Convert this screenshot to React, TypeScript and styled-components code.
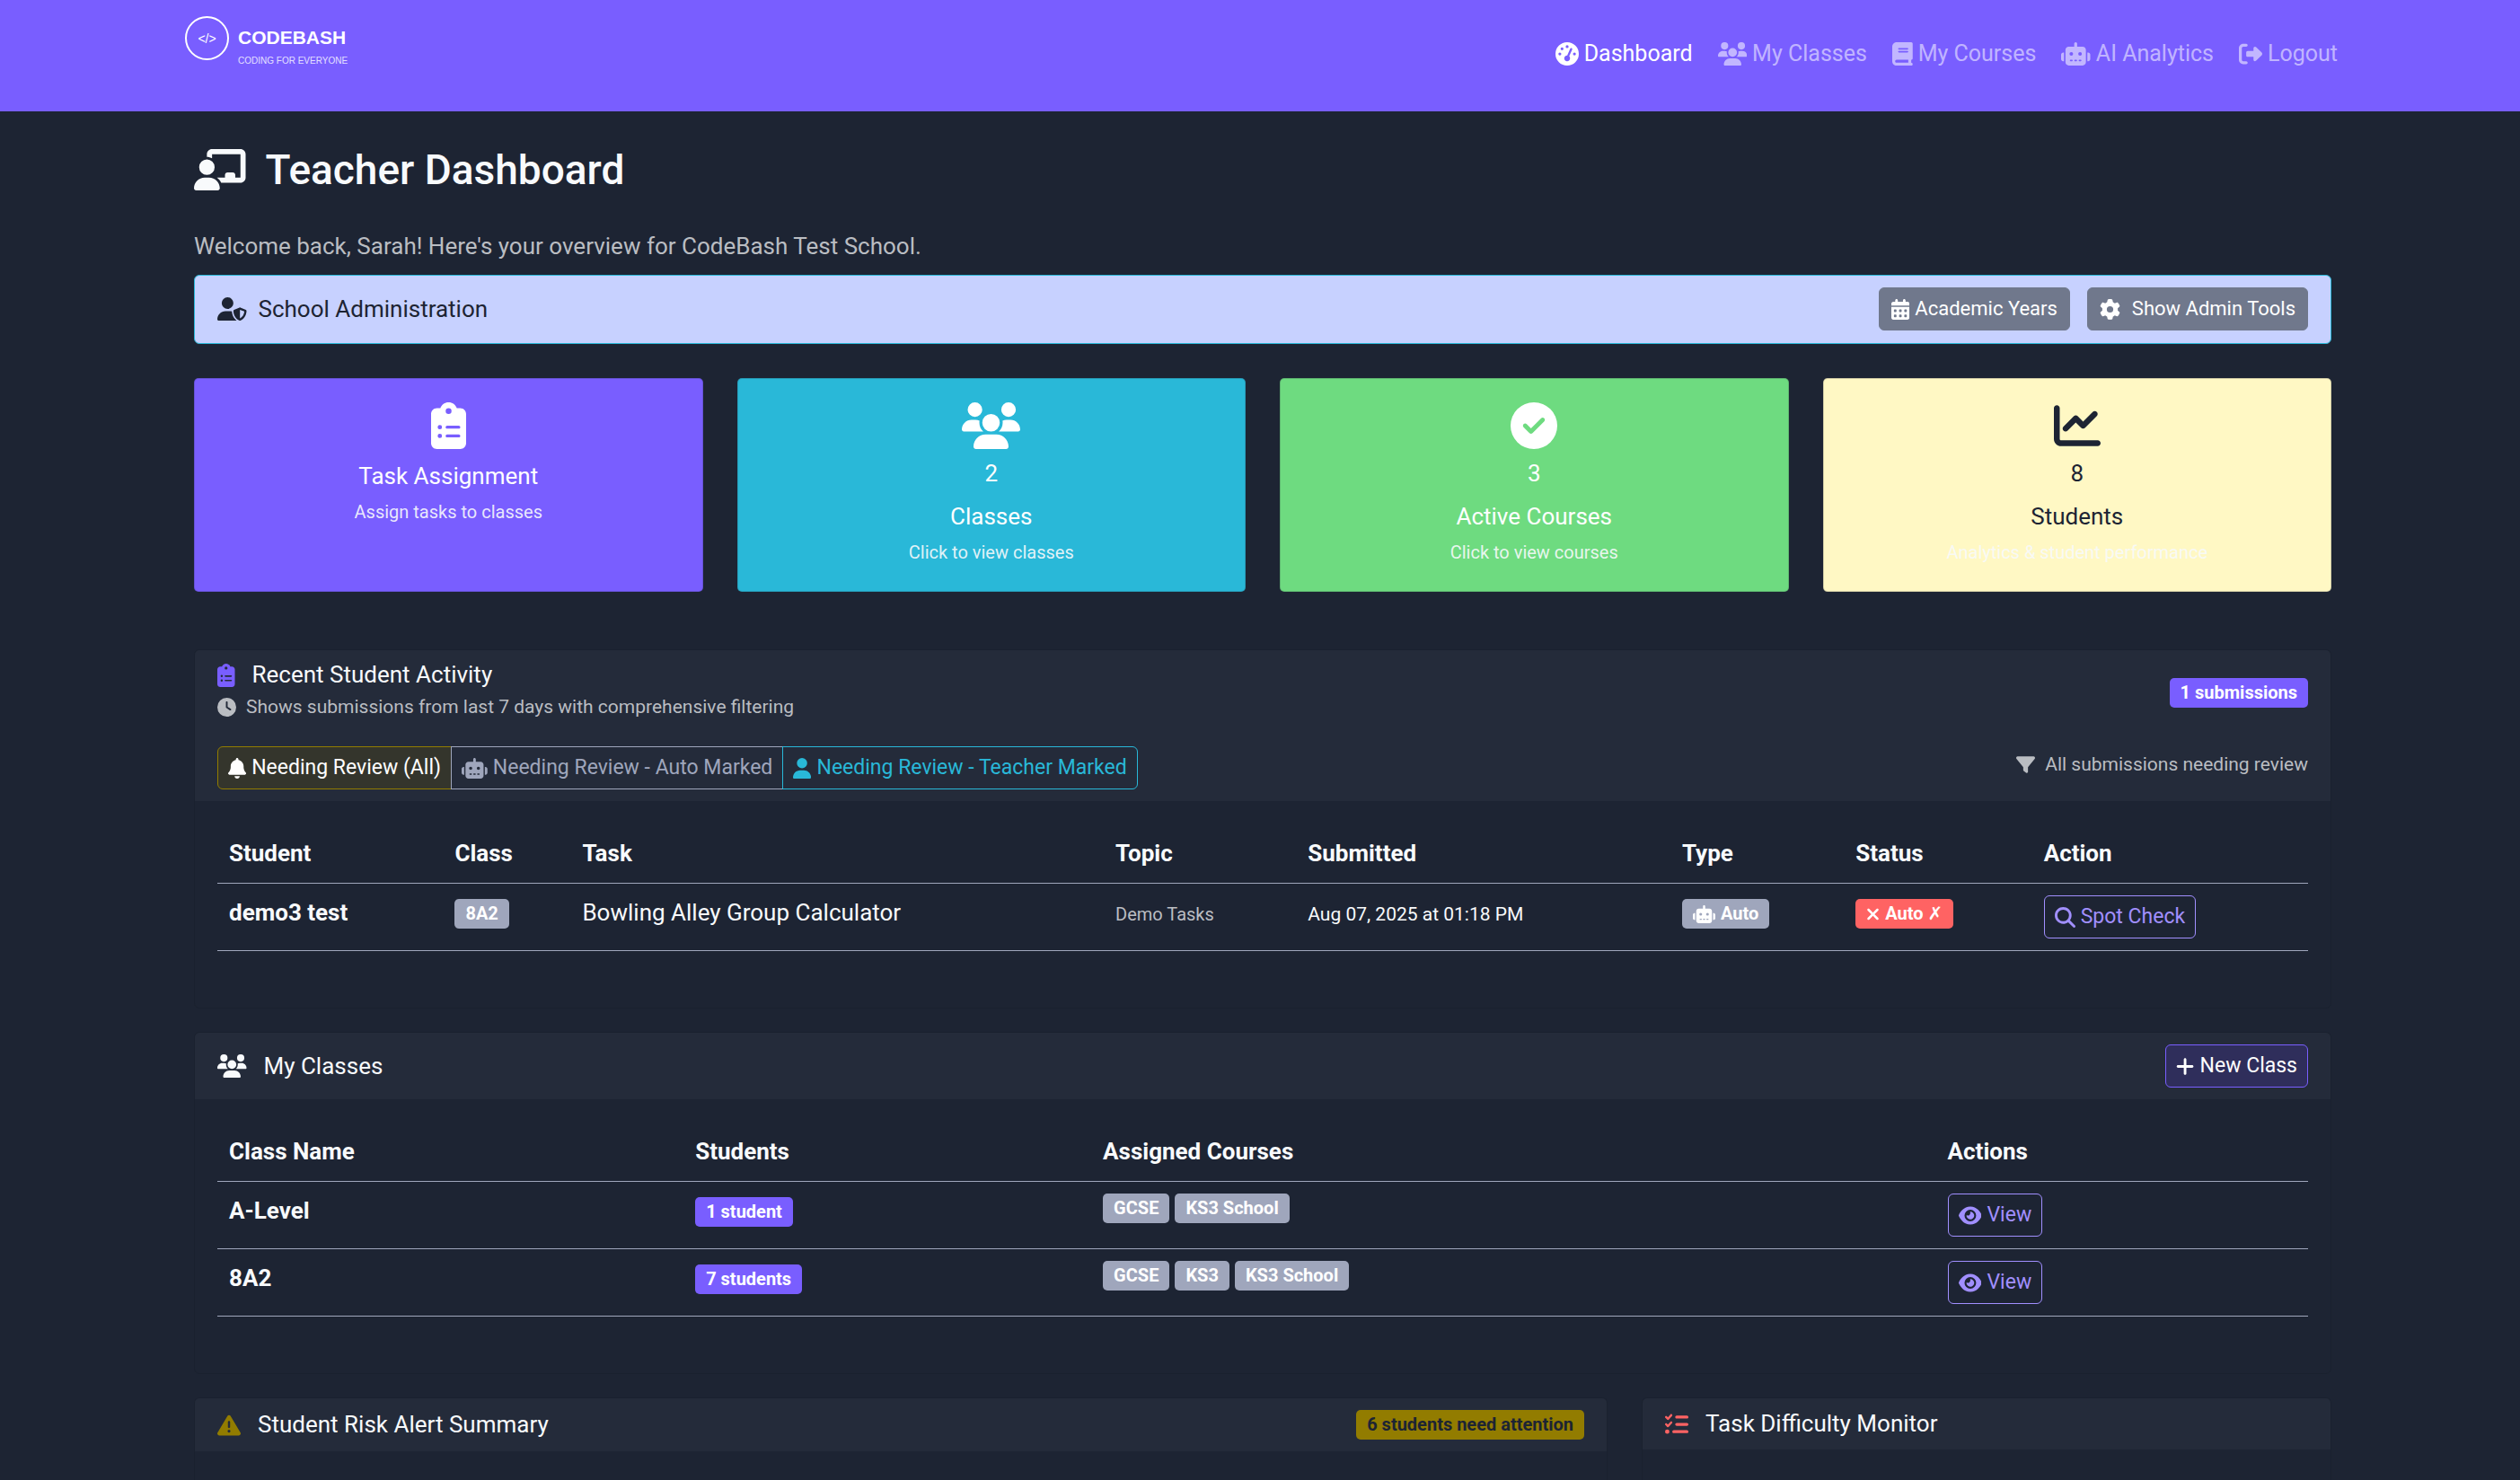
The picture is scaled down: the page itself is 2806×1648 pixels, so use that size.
import React from "react";
import styled, { createGlobalStyle, css } from "styled-components";
import type { IconType } from "react-icons";
import {
  FaBell,
  FaBook,
  FaCalendarDays,
  FaChalkboardUser,
  FaChartLine,
  FaCircleCheck,
  FaClipboardList,
  FaClock,
  FaEye,
  FaFilter,
  FaGaugeHigh,
  FaGear,
  FaListCheck,
  FaMagnifyingGlass,
  FaPlus,
  FaRightFromBracket,
  FaRobot,
  FaTriangleExclamation,
  FaUser,
  FaUserShield,
  FaUsers,
  FaXmark,
} from "react-icons/fa6";

const c = {
  page: "#1d2433",
  header: "#242b3a",
  purple: "#795eff",
  lilac: "#a18fff",
  cyan: "#29b8d8",
  green: "#6edb80",
  yellow: "#fff8c4",
  red: "#ff6363",
  olive: "#927c00",
  grey: "#9fa6bc",
  text: "#f8fafc",
  muted: "#babdc2",
};

const GlobalStyle = createGlobalStyle`
  *, *::before, *::after { box-sizing: border-box; }
  body {
    margin: 0;
    background: ${c.page};
    color: ${c.text};
    font-family: Roboto, "Noto Sans", sans-serif;
    font-size: 26px;
    line-height: 38px;
  }
  a { color: inherit; text-decoration: none; }
  button { font: inherit; cursor: pointer; }
  h1, h2, p { margin: 0; }
`;

const Page = styled.div`
  display: flex;
  flex-direction: column;
  min-height: 100vh;
`;

const Navbar = styled.header`
  display: flex;
  justify-content: space-between;
  align-items: flex-start;
  height: 124px;
  padding: 18px 203px 0 206px;
  background: ${c.purple};
`;

const Brand = styled.a`
  display: flex;
  gap: 10px;
  color: #fff;
  font-family: "Liberation Sans", Arial, sans-serif;
`;

const BrandMark = styled.span`
  display: flex;
  align-items: center;
  justify-content: center;
  width: 49px;
  height: 49px;
  border: 2px solid #fff;
  border-radius: 50%;
  font-size: 14px;
`;

const BrandText = styled.span`
  display: flex;
  flex-direction: column;
  padding-top: 12px;
`;

const BrandName = styled.strong`
  font-size: 21px;
  line-height: 24px;
`;

const BrandTag = styled.span`
  padding-top: 8px;
  font-size: 10px;
  line-height: 12px;
  opacity: 0.8;
`;

const NavLinks = styled.nav`
  display: flex;
  gap: 28px;
  padding-top: 23px;
`;

/* Width of each glyph's view box; all are 512 units high. */
const glyphWidths = new Map<IconType, number>([
  [FaUsers, 640],
  [FaRobot, 640],
  [FaChalkboardUser, 640],
  [FaUserShield, 640],
  [FaEye, 576],
  [FaBook, 448],
  [FaCalendarDays, 448],
  [FaUser, 448],
  [FaBell, 448],
  [FaPlus, 448],
  [FaClipboardList, 384],
  [FaXmark, 384],
]);

const IconBox = styled.span<{ $units: number; $size?: number; $color?: string; $gap: number }>`
  display: inline-flex;
  align-items: center;
  flex: none;
  font-size: ${(p) => (p.$size ? `${p.$size}px` : "inherit")};
  color: ${(p) => p.$color ?? "inherit"};
  margin-right: ${(p) => p.$gap}px;
  svg {
    display: block;
    flex: none;
    width: calc(1em * ${(p) => p.$units} / 512);
    height: 1em;
  }
`;

type IconProps = { glyph: IconType; size?: number; color?: string; gap?: number };

function Icon({ glyph: Glyph, size, color, gap = 0 }: IconProps) {
  return (
    <IconBox $units={glyphWidths.get(Glyph) ?? 512} $size={size} $color={color} $gap={gap} aria-hidden>
      <Glyph />
    </IconBox>
  );
}

const NavLink = styled.a<{ $active?: boolean }>`
  display: flex;
  align-items: center;
  font-size: 25px;
  color: ${(p) => (p.$active ? "#fff" : "rgba(255, 255, 255, 0.55)")};
`;

const Main = styled.main`
  flex: 1;
  display: flex;
  flex-direction: column;
  padding: 38px 210px 0 216px;
`;

const Title = styled.h1`
  display: flex;
  align-items: center;
  font-size: 46px;
  line-height: 54px;
  font-weight: 500;
`;

const Welcome = styled.p`
  padding-top: 39px;
  color: ${c.muted};
`;

const AdminBar = styled.section`
  display: flex;
  align-items: center;
  justify-content: space-between;
  margin-top: 13px;
  padding: 13px 25px 14px;
  border: 1px solid ${c.cyan};
  border-radius: 6px;
  background: #c7d1ff;
  color: ${c.page};
`;

const Heading = styled.h2`
  display: flex;
  align-items: center;
  font-size: 26px;
  line-height: 31px;
  font-weight: 400;
`;

const Group = styled.div`
  display: flex;
  gap: 19px;
`;

const variants = {
  solid: css`
    padding: 0 13px;
    border-color: #70788c;
    background: #70788c;
    color: #fff;
    font-size: 22px;
  `,
  primary: css`
    border-color: ${c.purple};
    background: #2f2e5b;
    color: #fff;
    font-size: 23px;
  `,
  outline: css`
    border-color: ${c.lilac};
    color: ${c.lilac};
    font-size: 23px;
  `,
};

const Button = styled.button<{ $variant: keyof typeof variants }>`
  display: inline-flex;
  align-items: center;
  height: 48px;
  padding: 0 11px;
  border: 1px solid;
  border-radius: 6px;
  background: transparent;
  line-height: 34px;
  white-space: nowrap;
  ${(p) => variants[p.$variant]}
`;

const StatGrid = styled.section`
  display: grid;
  grid-template-columns: repeat(4, 1fr);
  gap: 38px;
  margin-top: 38px;
`;

const StatCard = styled.a<{ $bg: string; $dark?: boolean }>`
  display: flex;
  flex-direction: column;
  align-items: center;
  height: 238px;
  padding: 26px;
  border: 1px solid rgba(29, 36, 51, 0.2);
  border-radius: 5px;
  background: ${(p) => p.$bg};
  color: ${(p) => (p.$dark ? c.page : "#fff")};
`;

const StatCount = styled.span`
  padding-top: 9px;
  line-height: 36px;
`;

const StatName = styled.span`
  padding-top: 13px;
  line-height: 34px;
`;

const StatHint = styled.small`
  padding-top: 7px;
  font-size: 20px;
  line-height: 32px;
  color: rgba(248, 250, 252, 0.9);
`;

const Card = styled.section`
  border: 1px solid rgba(0, 0, 0, 0.08);
  border-radius: 6px;
`;

const CardHeader = styled.div`
  display: flex;
  align-items: center;
  justify-content: space-between;
  padding: 13px 25px;
  border-radius: 5px 5px 0 0;
  background: ${c.header};
`;

const ActivityHeader = styled.div`
  padding: 12px 25px 13px;
  border-radius: 5px 5px 0 0;
  background: ${c.header};
`;

const Split = styled.div`
  display: flex;
  align-items: center;
  justify-content: space-between;
`;

const Filters = styled(Split)`
  align-items: flex-start;
  padding-top: 24px;
`;

const Subtle = styled.small`
  display: flex;
  align-items: center;
  color: ${c.muted};
  font-size: 21px;
  line-height: 40px;
`;

const Segments = styled.div`
  display: flex;
`;

const Segment = styled.button<{ $color: string; $active?: boolean }>`
  display: inline-flex;
  align-items: center;
  height: 48px;
  padding: 0 11px;
  border: 1px solid ${(p) => p.$color};
  background: ${(p) => (p.$active ? "#34352c" : "transparent")};
  color: ${(p) => (p.$active ? "#fff" : p.$color)};
  font-size: 23px;
  white-space: nowrap;
  & + & {
    margin-left: -1px;
  }
  &:first-child {
    border-radius: 6px 0 0 6px;
  }
  &:last-child {
    border-radius: 0 6px 6px 0;
  }
`;

const Badge = styled.span<{ $bg: string; $dark?: boolean }>`
  display: inline-flex;
  align-items: center;
  height: 33px;
  padding: 0 12px;
  border-radius: 5px;
  background: ${(p) => p.$bg};
  color: ${(p) => (p.$dark ? c.page : "#fff")};
  font-size: 20px;
  line-height: 33px;
  font-weight: 700;
  white-space: nowrap;
`;

const Cross = styled.span`
  padding-left: 5px;
  font-family: "DejaVu Sans", sans-serif;
  font-weight: 400;
`;

const Badges = styled.div`
  display: flex;
  gap: 6px;
`;

const CardBody = styled.div`
  padding: 26px 25px 63px;
`;

const Table = styled.table`
  width: 100%;
  table-layout: fixed;
  border-collapse: collapse;
  th,
  td {
    padding: 13px 13px;
    border-bottom: 1px solid ${c.grey};
    text-align: left;
    vertical-align: top;
    font-weight: 400;
    white-space: nowrap;
  }
  thead th {
    padding-bottom: 14px;
  }
  thead th,
  tbody th {
    font-weight: 700;
  }
  td {
    height: 75px;
  }
`;

const Col = styled.col<{ $share: number }>`
  width: ${(p) => p.$share}%;
`;

const CellText = styled.small<{ $muted?: boolean }>`
  font-size: ${(p) => (p.$muted ? 20 : 21)}px;
  color: ${(p) => (p.$muted ? c.muted : "inherit")};
`;

const CellBadge = styled.div`
  display: flex;
  padding-top: 4px;
`;

const Spacer = styled.div<{ $size: number }>`
  height: ${(p) => p.$size}px;
  flex: none;
`;

const BottomGrid = styled.section`
  flex: 1;
  display: grid;
  grid-template-columns: 1574fr 768fr;
  gap: 38px;
  margin-top: 26px;
`;

const BottomCard = styled(Card)`
  border-bottom: 0;
  border-radius: 6px 6px 0 0;
`;

const navItems = [
  { label: "Dashboard", icon: FaGaugeHigh, active: true },
  { label: "My Classes", icon: FaUsers },
  { label: "My Courses", icon: FaBook },
  { label: "AI Analytics", icon: FaRobot },
  { label: "Logout", icon: FaRightFromBracket },
];

const stats = [
  { name: "Task Assignment", hint: "Assign tasks to classes", icon: FaClipboardList, bg: c.purple },
  { name: "Classes", count: 2, hint: "Click to view classes", icon: FaUsers, bg: c.cyan },
  { name: "Active Courses", count: 3, hint: "Click to view courses", icon: FaCircleCheck, bg: c.green },
  { name: "Students", count: 8, hint: "Analytics & student performance", icon: FaChartLine, bg: c.yellow, dark: true },
];

const classes = [
  { name: "A-Level", students: "1 student", courses: ["GCSE", "KS3 School"] },
  { name: "8A2", students: "7 students", courses: ["GCSE", "KS3", "KS3 School"] },
];

const activityCols = [10.8, 6.1, 25.5, 9.2, 17.9, 8.3, 9, 13.2];
const classCols = [22.3, 19.5, 40.4, 17.8];

export default function App() {
  return (
    <>
      <GlobalStyle />
      <Page>
        <Navbar>
          <Brand href="#">
            <BrandMark>&lt;/&gt;</BrandMark>
            <BrandText>
              <BrandName>CODEBASH</BrandName>
              <BrandTag>CODING FOR EVERYONE</BrandTag>
            </BrandText>
          </Brand>
          <NavLinks>
            {navItems.map((item) => (
              <NavLink key={item.label} href="#" $active={item.active}>
                <Icon glyph={item.icon} size={26} gap={6} />
                {item.label}
              </NavLink>
            ))}
          </NavLinks>
        </Navbar>

        <Main>
          <Title>
            <Icon glyph={FaChalkboardUser} gap={22} />
            Teacher Dashboard
          </Title>
          <Welcome>Welcome back, Sarah! Here's your overview for CodeBash Test School.</Welcome>

          <AdminBar>
            <Heading>
              <Icon glyph={FaUserShield} gap={13} />
              School Administration
            </Heading>
            <Group>
              <Button $variant="solid">
                <Icon glyph={FaCalendarDays} size={23} gap={6} />
                Academic Years
              </Button>
              <Button $variant="solid">
                <Icon glyph={FaGear} size={23} gap={13} />
                Show Admin Tools
              </Button>
            </Group>
          </AdminBar>

          <StatGrid>
            {stats.map((s) => (
              <StatCard key={s.name} href="#" $bg={s.bg} $dark={s.dark}>
                <Icon glyph={s.icon} size={52} />
                {s.count !== undefined && <StatCount>{s.count}</StatCount>}
                <StatName>{s.name}</StatName>
                <StatHint>{s.hint}</StatHint>
              </StatCard>
            ))}
          </StatGrid>

          <Spacer $size={64} />

          <Card>
            <ActivityHeader>
              <Split>
                <div>
                  <Heading>
                    <Icon glyph={FaClipboardList} color={c.purple} gap={19} />
                    Recent Student Activity
                  </Heading>
                  <Subtle>
                    <Icon glyph={FaClock} gap={11} />
                    Shows submissions from last 7 days with comprehensive filtering
                  </Subtle>
                </div>
                <Badge $bg={c.purple}>1 submissions</Badge>
              </Split>
              <Filters>
                <Segments role="group" aria-label="Review filter">
                  <Segment $color={c.olive} $active>
                    <Icon glyph={FaBell} gap={6} />
                    Needing Review (All)
                  </Segment>
                  <Segment $color={c.grey}>
                    <Icon glyph={FaRobot} gap={6} />
                    Needing Review - Auto Marked
                  </Segment>
                  <Segment $color={c.cyan}>
                    <Icon glyph={FaUser} gap={6} />
                    Needing Review - Teacher Marked
                  </Segment>
                </Segments>
                <Subtle>
                  <Icon glyph={FaFilter} gap={11} />
                  All submissions needing review
                </Subtle>
              </Filters>
            </ActivityHeader>
            <CardBody>
              <Table>
                <colgroup>
                  {activityCols.map((w, i) => (
                    <Col key={i} $share={w} />
                  ))}
                </colgroup>
                <thead>
                  <tr>
                    {["Student", "Class", "Task", "Topic", "Submitted", "Type", "Status", "Action"].map((h) => (
                      <th key={h} scope="col">
                        {h}
                      </th>
                    ))}
                  </tr>
                </thead>
                <tbody>
                  <tr>
                    <th scope="row">demo3 test</th>
                    <td>
                      <CellBadge>
                        <Badge $bg={c.grey}>8A2</Badge>
                      </CellBadge>
                    </td>
                    <td>Bowling Alley Group Calculator</td>
                    <td>
                      <CellText $muted>Demo Tasks</CellText>
                    </td>
                    <td>
                      <CellText>Aug 07, 2025 at 01:18 PM</CellText>
                    </td>
                    <td>
                      <CellBadge>
                        <Badge $bg={c.grey}>
                          <Icon glyph={FaRobot} gap={6} />
                          Auto
                        </Badge>
                      </CellBadge>
                    </td>
                    <td>
                      <CellBadge>
                        <Badge $bg={c.red}>
                          <Icon glyph={FaXmark} gap={6} />
                          Auto
                          <Cross>✗</Cross>
                        </Badge>
                      </CellBadge>
                    </td>
                    <td>
                      <Button $variant="outline">
                        <Icon glyph={FaMagnifyingGlass} gap={6} />
                        Spot Check
                      </Button>
                    </td>
                  </tr>
                </tbody>
              </Table>
            </CardBody>
          </Card>

          <Spacer $size={26} />

          <Card>
            <CardHeader>
              <Heading>
                <Icon glyph={FaUsers} gap={19} />
                My Classes
              </Heading>
              <Button $variant="primary">
                <Icon glyph={FaPlus} gap={6} />
                New Class
              </Button>
            </CardHeader>
            <CardBody>
              <Table>
                <colgroup>
                  {classCols.map((w, i) => (
                    <Col key={i} $share={w} />
                  ))}
                </colgroup>
                <thead>
                  <tr>
                    {["Class Name", "Students", "Assigned Courses", "Actions"].map((h) => (
                      <th key={h} scope="col">
                        {h}
                      </th>
                    ))}
                  </tr>
                </thead>
                <tbody>
                  {classes.map((row) => (
                    <tr key={row.name}>
                      <th scope="row">{row.name}</th>
                      <td>
                        <CellBadge>
                          <Badge $bg={c.purple}>{row.students}</Badge>
                        </CellBadge>
                      </td>
                      <td>
                        <Badges>
                          {row.courses.map((course) => (
                            <Badge key={course} $bg={c.grey}>
                              {course}
                            </Badge>
                          ))}
                        </Badges>
                      </td>
                      <td>
                        <Button $variant="outline">
                          <Icon glyph={FaEye} gap={6} />
                          View
                        </Button>
                      </td>
                    </tr>
                  ))}
                </tbody>
              </Table>
            </CardBody>
          </Card>

          <BottomGrid>
            <BottomCard>
              <CardHeader>
                <Heading>
                  <Icon glyph={FaTriangleExclamation} color={c.olive} gap={19} />
                  Student Risk Alert Summary
                </Heading>
                <Badge $bg={c.olive} $dark>
                  6 students need attention
                </Badge>
              </CardHeader>
            </BottomCard>
            <BottomCard>
              <CardHeader>
                <Heading>
                  <Icon glyph={FaListCheck} color={c.red} gap={19} />
                  Task Difficulty Monitor
                </Heading>
              </CardHeader>
            </BottomCard>
          </BottomGrid>
        </Main>
      </Page>
    </>
  );
}
